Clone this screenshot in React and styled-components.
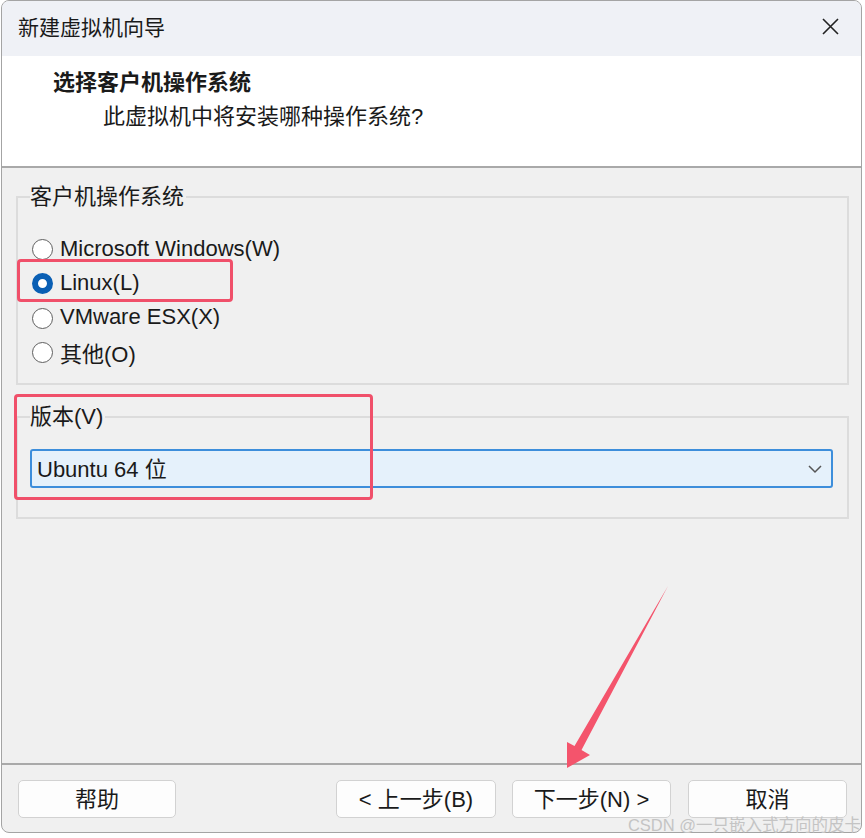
import React from 'react'
import styled, { createGlobalStyle } from 'styled-components'

const GlobalStyle = createGlobalStyle`
  body {
    margin: 0;
    background: #ffffff;
    font-family: "Liberation Sans", "Noto Sans CJK SC", sans-serif;
    color: #1a1a1a;
  }
`

const Page = styled.div`
  position: relative;
  width: 865px;
  height: 838px;
  overflow: hidden;
`

const Window = styled.div`
  margin-left: 1px;
  width: 861px;
  height: 833px;
  box-sizing: border-box;
  border: 1px solid #a4a4a4;
  border-radius: 8px;
  overflow: hidden;
  display: flex;
  flex-direction: column;
  background: #f0f0f0;
`

const TitleBar = styled.div`
  height: 55px;
  flex: none;
  box-sizing: border-box;
  background: #eff1f6;
  display: flex;
  align-items: center;
  justify-content: space-between;
  padding: 0 21px 5px 16px;
  font-size: 21px;
`

const CloseIcon = styled.svg`
  width: 19px;
  height: 19px;
`

const Header = styled.div`
  height: 110px;
  flex: none;
  box-sizing: border-box;
  background: #ffffff;
  padding: 12px 0 0 51px;
`

const Heading = styled.div`
  font-size: 22px;
  font-weight: 700;
  line-height: 30px;
`

const Subtitle = styled.div`
  font-size: 22px;
  line-height: 30px;
  margin: 4px 0 0 50px;
`

const Divider = styled.div`
  height: 2px;
  flex: none;
  background: #a9a9a9;
`

const Body = styled.div`
  flex: 1;
  padding: 17px 12px 0 14px;
  display: flex;
  flex-direction: column;
  gap: 20px;
`

const Group = styled.fieldset`
  margin: 0;
  border: 2px solid #dcdcdc;
  padding: 0 14px ${p => p.$bottom}px 12px;
`

const Legend = styled.legend`
  padding: 0 2px 0 0;
  font-size: 22px;
  line-height: 24px;
`

const RadioList = styled.div`
  margin-top: 22px;
  display: flex;
  flex-direction: column;
`

const RadioRow = styled.label`
  height: 34.3px;
  display: flex;
  align-items: center;
  gap: 7px;
  padding: 1px 0 0 2px;
  box-sizing: border-box;
  font-size: 22px;
`

const RadioDot = styled.span`
  width: 21px;
  height: 21px;
  margin-top: 2px;
  box-sizing: border-box;
  border-radius: 50%;
  flex: none;
  border: ${p => (p.$checked ? '6.5px solid #0a5fb4' : '1.5px solid #5f5f5f')};
  background: #ffffff;
`

const Select = styled.div`
  margin-top: 20px;
  height: 39px;
  box-sizing: border-box;
  border: 2px solid #3d8edb;
  border-radius: 3px;
  background: #e5f1fb;
  display: flex;
  align-items: center;
  justify-content: space-between;
  padding: 0 8px 4px 5px;
  font-size: 22px;
`

const Chevron = styled.svg`
  width: 16px;
  height: 10px;
  margin-top: 4px;
`

const Footer = styled.div`
  flex: none;
  display: flex;
  align-items: center;
  padding: 15px 14px 14px 16px;
`

const Button = styled.button`
  width: ${p => p.$w}px;
  height: 38px;
  margin-left: ${p => p.$gap || 0}px;
  box-sizing: border-box;
  background: #fdfdfd;
  border: 1px solid #d2d2d2;
  border-radius: 5px;
  font-family: inherit;
  font-size: 22px;
  color: #1a1a1a;
  padding: 0 0 4px;
`

const Spacer = styled.div`
  flex: 1;
`

// annotation overlays drawn over the dialog
const RedBox = styled.div`
  position: absolute;
  left: ${p => p.$x}px;
  top: ${p => p.$y}px;
  width: ${p => p.$w}px;
  height: ${p => p.$h}px;
  box-sizing: border-box;
  border: 3px solid #f0506a;
  border-radius: 4px;
  pointer-events: none;
`

const ArrowLayer = styled.svg`
  position: absolute;
  left: 0;
  top: 0;
  width: 865px;
  height: 838px;
  pointer-events: none;
`

const Watermark = styled.div`
  position: absolute;
  right: 4px;
  bottom: 2px;
  font-size: 16.5px;
  color: #c4c4c4;
  font-family: "Liberation Sans", "Noto Sans CJK SC", sans-serif;
`

const osOptions = [
  { label: 'Microsoft Windows(W)' },
  { label: 'Linux(L)', checked: true },
  { label: 'VMware ESX(X)' },
  { label: '其他(O)' },
]

export default function App() {
  return (
    <Page>
      <GlobalStyle />
      <Window>
        <TitleBar>
          <span>新建虚拟机向导</span>
          <CloseIcon viewBox="0 0 19 19">
            <path d="M2 2 L17 17 M17 2 L2 17" stroke="#222" strokeWidth="1.6" fill="none" />
          </CloseIcon>
        </TitleBar>
        <Header>
          <Heading>选择客户机操作系统</Heading>
          <Subtitle>此虚拟机中将安装哪种操作系统?</Subtitle>
        </Header>
        <Divider />
        <Body>
          <Group $bottom={15}>
            <Legend>客户机操作系统</Legend>
            <RadioList>
              {osOptions.map(o => (
                <RadioRow key={o.label}>
                  <RadioDot $checked={o.checked} />
                  {o.label}
                </RadioRow>
              ))}
            </RadioList>
          </Group>
          <Group $bottom={29}>
            <Legend>版本(V)</Legend>
            <Select>
              <span>Ubuntu 64 位</span>
              <Chevron viewBox="0 0 16 10">
                <path d="M2 2 L8 8 L14 2" stroke="#555" strokeWidth="1.5" fill="none" />
              </Chevron>
            </Select>
          </Group>
        </Body>
        <Divider />
        <Footer>
          <Button $w={158}>帮助</Button>
          <Spacer />
          <Button $w={160}>&lt; 上一步(B)</Button>
          <Button $w={159} $gap={16}>下一步(N) &gt;</Button>
          <Button $w={159} $gap={17}>取消</Button>
        </Footer>
      </Window>

      <RedBox $x={17} $y={259} $w={216} $h={43} />
      <RedBox $x={14} $y={394} $w={359} $h={106} />
      <ArrowLayer viewBox="0 0 865 838">
        <polygon
          points="668,586 581.5,750 590,755 567,768 567,742 574.5,746"
          fill="#f4546c"
        />
      </ArrowLayer>
      <Watermark>CSDN @一只嵌入式方向的皮卡</Watermark>
    </Page>
  )
}
